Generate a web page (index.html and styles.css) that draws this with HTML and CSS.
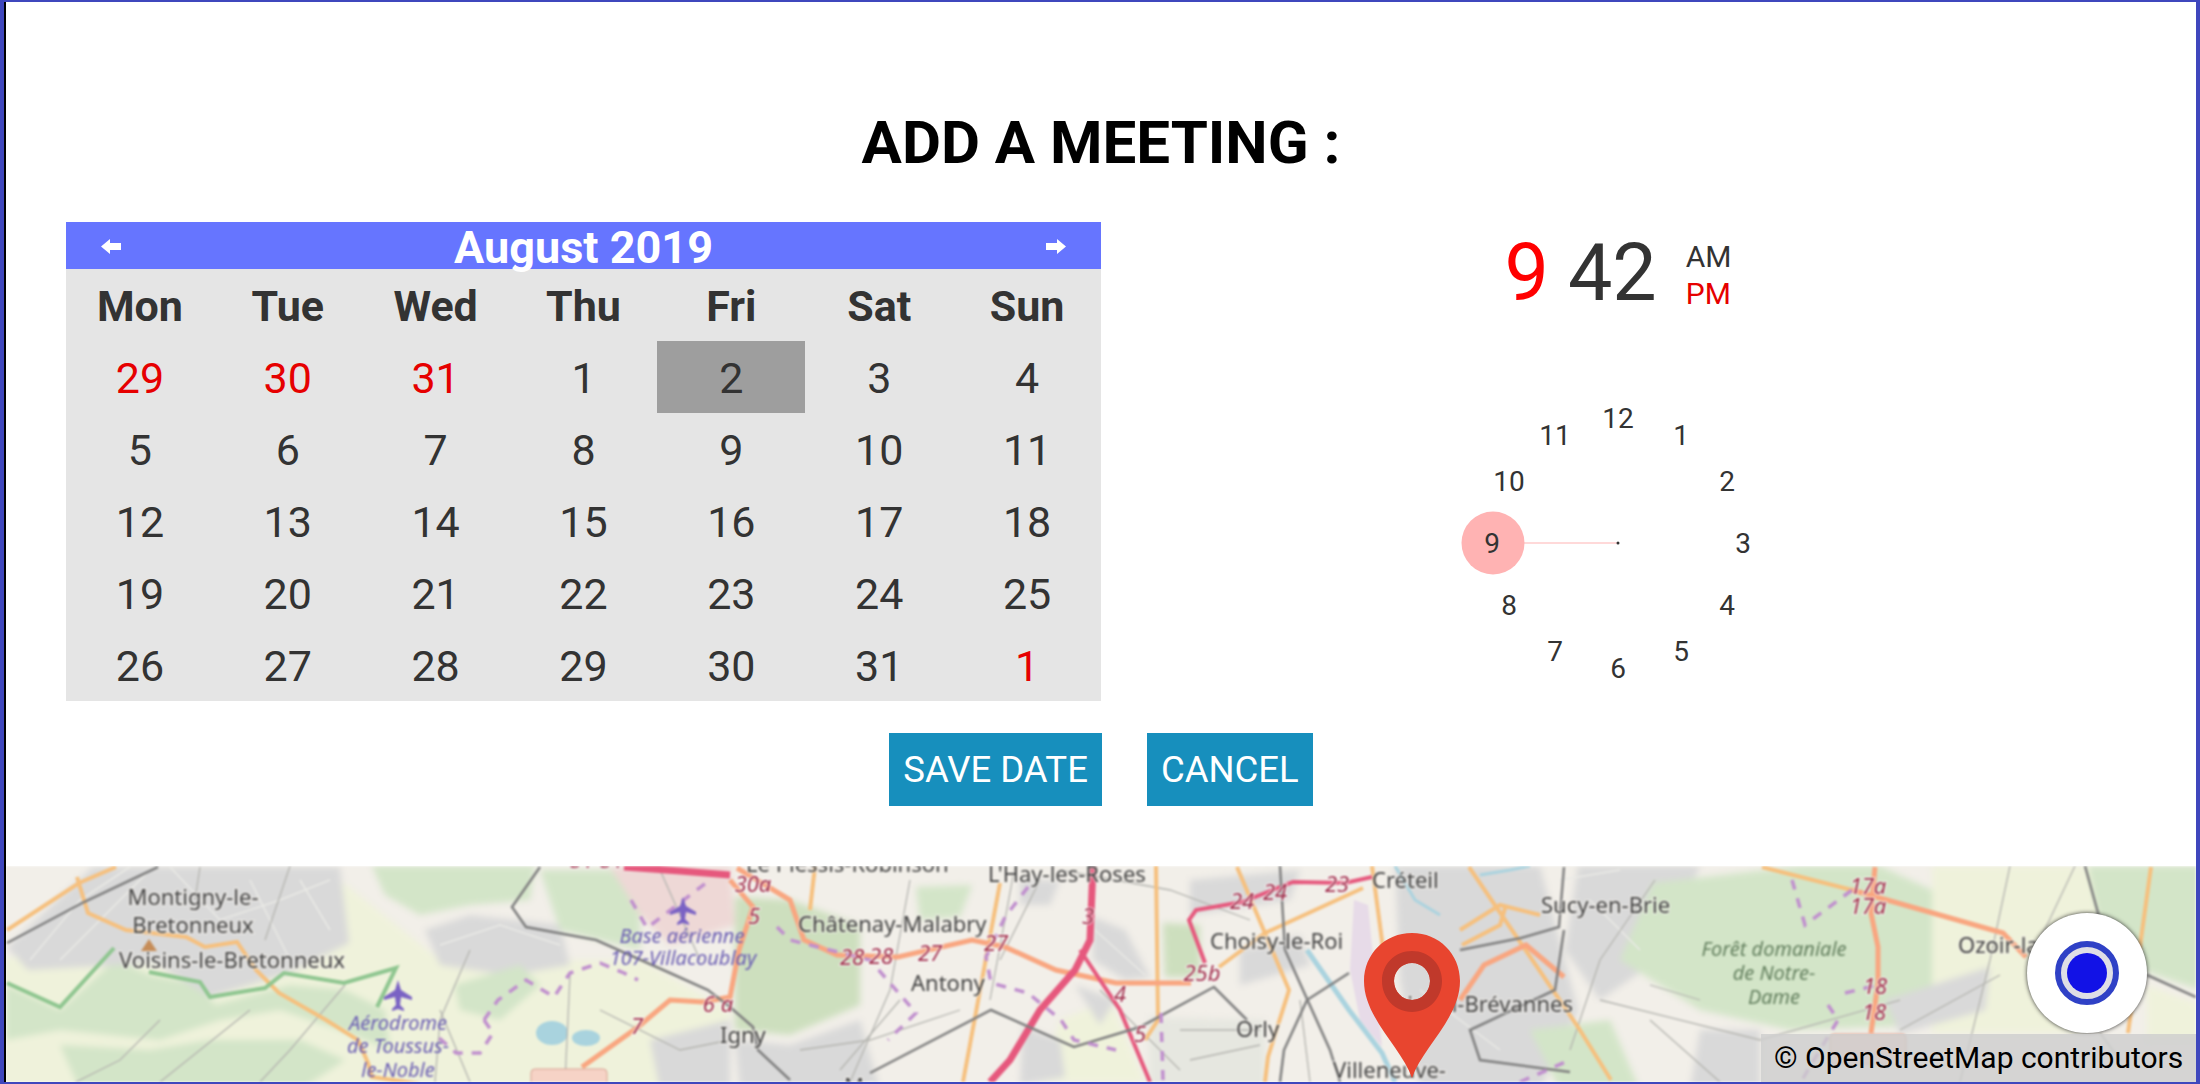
FILE: index.html
```html
<!DOCTYPE html>
<html>
<head>
    <title>Add a meeting</title>
    <link rel="stylesheet" href="styles.css">
</head>
<body>
    <div class="frame">
        <div class="form">
            <h1 class="form-title">ADD A MEETING :</h1>

            <div class="pickers">
                <div class="calendar">
                    <div class="calendar-header">
                        <svg class="arrow" width="20" height="15" viewBox="0 0 20 15"><polygon points="0,7.5 9,0 9,4 20,4 20,11 9,11 9,15"/></svg>
                        <span class="month">August 2019</span>
                        <svg class="arrow" width="20" height="15" viewBox="0 0 20 15"><polygon points="20,7.5 11,0 11,4 0,4 0,11 11,11 11,15"/></svg>
                    </div>
                    <div class="days">
                        <div class="day-name">Mon</div><div class="day-name">Tue</div><div class="day-name">Wed</div><div class="day-name">Thu</div><div class="day-name">Fri</div><div class="day-name">Sat</div><div class="day-name">Sun</div>
                        <div class="day other">29</div><div class="day other">30</div><div class="day other">31</div><div class="day">1</div><div class="day selected">2</div><div class="day">3</div><div class="day">4</div>
                        <div class="day">5</div><div class="day">6</div><div class="day">7</div><div class="day">8</div><div class="day">9</div><div class="day">10</div><div class="day">11</div>
                        <div class="day">12</div><div class="day">13</div><div class="day">14</div><div class="day">15</div><div class="day">16</div><div class="day">17</div><div class="day">18</div>
                        <div class="day">19</div><div class="day">20</div><div class="day">21</div><div class="day">22</div><div class="day">23</div><div class="day">24</div><div class="day">25</div>
                        <div class="day">26</div><div class="day">27</div><div class="day">28</div><div class="day">29</div><div class="day">30</div><div class="day">31</div><div class="day other">1</div>
                    </div>
                </div>

                <div class="time">
                    <div class="time-display">
                        <span class="hour">9</span>
                        <span class="minute">42</span>
                        <div class="ampm">
                            <span>AM</span>
                            <span class="active">PM</span>
                        </div>
                    </div>
                    <svg class="clock" width="340" height="290" viewBox="0 0 340 290">
                        <circle class="clock-hover" cx="44" cy="145" r="31.5"/>
                        <line class="clock-hand" x1="44" y1="145" x2="169" y2="145"/>
                        <circle class="clock-center" cx="169" cy="145" r="1.5"/>
                        <text x="169" y="30">12</text>
                        <text x="232" y="47">1</text>
                        <text x="278" y="93">2</text>
                        <text x="294" y="155">3</text>
                        <text x="278" y="217">4</text>
                        <text x="232" y="263">5</text>
                        <text x="169" y="280">6</text>
                        <text x="106" y="263">7</text>
                        <text x="60" y="217">8</text>
                        <text x="43" y="155">9</text>
                        <text x="60" y="93">10</text>
                        <text x="106" y="47">11</text>
                    </svg>
                </div>
            </div>

            <div class="actions">
                <button class="btn">SAVE DATE</button>
                <button class="btn">CANCEL</button>
            </div>
        </div>

        <div class="map">
            <svg class="map-tiles" width="2190" height="216" viewBox="6 866 2190 216" preserveAspectRatio="none">
                <!-- land use -->
                <rect x="0" y="860" width="2200" height="230" fill="#f2efe9"/>
                <g class="land">
                    <polygon class="farm" points="0,960 340,880 440,960 640,960 730,1010 730,1090 0,1090"/>
                    <polygon class="wood" points="6,985 60,1010 115,960 150,975 200,985 215,1005 290,985 345,990 385,1010 390,1050 340,1030 280,1010 220,1020 160,1040 60,1030 6,1040"/>
                    <polygon class="wood" points="60,1045 150,1050 210,1040 300,1040 345,1060 300,1090 80,1090"/>
                    <polygon class="wood" points="372,866 535,866 530,900 470,905 420,915 385,895"/>
                    <polygon class="grey" points="7,947 93,867 340,867 349,943 289,973 210,997 154,963 28,970"/>
                    <polygon class="grey" points="425,930 470,915 560,925 570,965 510,975 440,965"/>
                    <polygon class="wood" points="560,930 640,950 640,890 610,870 540,870"/>
                    <polygon class="wood" points="455,985 520,965 540,985 500,1020 460,1010"/>
                    <polygon class="grey" points="650,1040 730,1020 730,1090 660,1090"/>
                    <polygon class="airport" points="610,867 730,867 735,925 670,945 640,915"/>
                    <polygon class="park" points="735,897 790,900 860,925 860,1005 790,1035 735,1030"/>
                    <polygon class="grey" points="735,1040 790,1045 860,1020 880,1090 740,1090"/>
                    <polygon class="wood" points="916,887 972,885 960,917 920,920"/>
                    <polygon class="grey" points="1020,880 1060,880 1050,905 1020,905"/>
                    <polygon class="grey" points="1093,917 1125,930 1150,977 1125,980 1093,960"/>
                    <polygon class="park" points="1163,923 1200,925 1200,977 1165,977"/>
                    <polygon class="farm" points="1060,1020 1110,1000 1145,1082 1040,1082"/>
                    <polygon class="grey" points="1023,1027 1060,1040 1065,1077 1020,1085"/>
                    <polygon class="grey" points="1075,985 1115,1000 1100,1025"/>
                    <polygon class="runway" points="1149,1017 1265,1020 1265,1090 1149,1090"/>
                    <polygon class="grey" points="1190,880 1300,870 1290,900 1190,915"/>
                    <polygon class="grey" points="1240,950 1300,935 1310,965 1240,985"/>
                    <polygon class="grey" points="1395,866 1540,866 1578,1010 1540,1090 1420,1090 1400,980"/>
                    <polygon class="grey" points="1578,866 1700,866 1658,960 1600,1000 1565,950"/>
                    <polygon class="wood" points="1653,883 1800,866 1880,866 1932,890 1932,1025 1790,1030 1700,1010 1620,960"/>
                    <polygon class="wood" points="1530,1030 1610,1020 1640,1090 1560,1090"/>
                    <polygon class="grey" points="1700,1030 1760,1030 1760,1090 1690,1090"/>
                    <polygon class="farm" points="1932,866 2088,866 2120,960 2080,1033 1932,1033"/>
                    <polygon class="grey" points="1885,1000 1990,967 1985,1010 1900,1034"/>
                    <polygon class="wood" points="2088,866 2200,866 2200,990 2150,973 2105,950"/>
                    <polygon class="farm" points="2147,985 2200,1005 2200,1040 2147,1040"/>
                </g>
                <polygon class="lilac" points="1354,900 1368,905 1382,1047 1360,1020 1350,970"/>

                <!-- water -->
                <polyline class="river" points="1307,950 1349,1010 1382,1053 1395,1082"/>
                <polyline class="river thin-river" points="1395,866 1415,900 1440,915"/>
                <polyline class="river thin-river" points="1480,875 1510,870 1530,866"/>
                <ellipse cx="552" cy="1033" rx="16" ry="12" fill="#a9d3de"/>
                <ellipse cx="586" cy="1038" rx="14" ry="8" fill="#a9d3de"/>

                <!-- streets in the built-up parts -->
                <g class="street">
                    <polyline points="30,960 80,900 130,867"/>
                    <polyline points="60,960 120,900 150,870"/>
                    <polyline points="170,867 220,920 280,900 330,880"/>
                    <polyline points="250,880 290,960"/>
                    <polyline points="300,880 330,930"/>
                    <polyline points="440,945 500,925 560,945"/>
                    <polyline points="1095,930 1145,975"/>
                    <polyline points="1420,990 1500,1050"/>
                    <polyline points="1590,900 1640,950"/>
                    <polyline points="1560,880 1620,870"/>
                </g>

                <!-- minor roads -->
                <g class="minor">
                    <polyline points="290,866 265,940"/>
                    <polyline points="200,867 195,900"/>
                    <polyline points="160,1020 120,1060 60,1090"/>
                    <polyline points="250,1010 160,1082"/>
                    <polyline points="345,985 290,1050 260,1082"/>
                    <polyline points="470,950 440,1020 435,1082"/>
                    <polyline points="440,1010 470,1082"/>
                    <polyline points="570,975 565,1082"/>
                    <polyline points="600,1010 680,1050 730,1040"/>
                    <polyline points="660,870 700,960"/>
                    <polyline points="910,880 890,990 850,1082"/>
                    <polyline points="900,1000 840,1070"/>
                    <polyline points="1015,866 990,1000"/>
                    <polyline points="1040,880 1000,960"/>
                    <polyline points="800,1050 870,1040 960,1010"/>
                    <polyline points="1060,870 1170,890 1250,920"/>
                    <polyline points="1100,990 1180,1070"/>
                    <polyline points="1300,1000 1310,1082"/>
                    <polyline points="1180,1030 1260,1030"/>
                    <polyline points="1190,1060 1260,1045"/>
                    <polyline points="1655,880 1600,960 1570,1050"/>
                    <polyline points="1650,1020 1720,1082"/>
                    <polyline points="1650,985 1700,1000"/>
                    <polyline points="2010,866 1990,960 1960,1082"/>
                    <polyline points="2075,866 2040,940"/>
                    <polyline points="1900,1030 2000,975"/>
                    <polyline points="1600,1000 1760,1040 1900,1000"/>
                    <polyline points="2100,1033 2120,1060"/>
                </g>

                <!-- main roads -->
                <g class="primary">
                    <polyline points="7,930 79,883 116,867"/>
                    <polyline points="77,877 88,913 126,930 186,937 205,947 237,942 256,970 279,993 326,1020 358,1040 368,1063 372,1077 428,1085"/>
                    <polyline points="815,866 810,910"/>
                    <polyline points="1000,883 963,1082"/>
                    <polyline points="1156,866 1158,1020 1145,1040"/>
                    <polyline points="1237,867 1289,990 1268,1057 1265,1082"/>
                    <polyline points="1219,967 1265,933 1363,888"/>
                    <polyline points="1372,866 1390,1000"/>
                    <polyline points="1469,867 1578,1027 1611,1080"/>
                    <polyline points="1460,930 1500,905 1540,915"/>
                    <polyline points="1462,945 1500,925 1506,905"/>
                    <polyline points="1762,867 1852,890"/>
                    <polyline points="2151,867 2128,1033"/>
                </g>
                <polyline class="trail" points="7,983 60,1007 114,948"/>
                <polyline class="trail" points="149,972 200,982 210,997 265,988 284,973 344,983 396,968 377,1007"/>
                <g class="trunk">
                    <polyline points="737,868 790,900 804,940 837,955 898,957 972,940 1005,947 1056,970 1116,983 1191,983"/>
                    <polyline points="582,1067 638,1027 670,1000 703,1002 730,997 739,950 753,907 730,880"/>
                    <polyline points="1460,1000 1484,965 1526,945 1564,977"/>
                    <polyline points="1852,890 2003,933 2026,957"/>
                    <polyline points="1875,867 1871,913 1878,947 1878,983 1871,1033"/>
                </g>
                <g class="motorway">
                    <polyline points="624,867 680,871 730,875"/>
                    <polyline points="1093,866 1090,940 1075,970 1040,1010 1010,1060 990,1082"/>
                    <polyline class="thin" points="1080,950 1120,1010 1150,1082"/>
                    <polyline class="thin" points="1205,963 1189,920 1196,910 1242,902 1293,882 1345,883 1372,877"/>
                </g>

                <!-- rail -->
                <g class="rail">
                    <polyline points="7,943 84,902 158,867"/>
                    <polyline points="540,867 512,907 526,927 596,940 670,973 708,990 730,1007 753,1027 758,1050 790,1080"/>
                    <polyline points="870,1073 991,1010 1074,1047 1140,1027 1214,987 1247,1020"/>
                    <polyline points="1349,973 1307,1000 1284,1050 1280,1082"/>
                    <polyline points="1280,866 1285,950 1330,1050 1340,1082"/>
                    <polyline points="1460,950 1521,938 1559,927 1564,867"/>
                    <polyline points="1564,930 1555,990 1470,1030 1480,1060 1570,1072"/>
                    <polyline points="2147,975 2196,997"/>
                    <polyline points="2085,866 2100,920"/>
                </g>

                <!-- boundaries -->
                <g class="boundary">
                    <polyline points="484,1020 498,1000 526,980 554,997 570,973 600,963 624,973 638,980"/>
                    <polyline points="484,1020 493,1033 480,1053 456,1053 438,1037"/>
                    <polyline points="631,900 647,928 710,880"/>
                    <polyline points="1028,887 1005,917 986,957 991,983 1028,993 1061,1020 1074,1040 1116,1050"/>
                    <polyline points="777,927 790,940 870,960 916,1013 888,1040"/>
                    <polyline points="1161,1013 1163,1080"/>
                    <polyline points="1792,880 1805,925 1852,890"/>
                    <polyline points="1828,1005 1838,1020 1790,1100"/>
                    <polyline points="1845,993 1878,985"/>
                    <polyline points="1520,1082 1570,1060"/>
                </g>

                <g class="peak">
                    <polygon points="149,939 157,951 141,951"/>
                </g>
                <g class="plane">
                    <path d="M398 980 l3 10 l11 7 v3 l-11 -3 l-1 8 l4 4 v2 l-6 -2 l-6 2 v-2 l4 -4 l-1 -8 l-11 3 v-3 l11 -7 z"/>
                    <path d="M683 897 l3 9 l10 6 v3 l-10 -3 l-1 7 l4 4 v2 l-6 -2 l-6 2 v-2 l4 -4 l-1 -7 l-10 3 v-3 l10 -6 z"/>
                </g>
                <g class="shield">
                    <rect x="531" y="1069" width="76" height="30" rx="4"/>
                    <rect x="1830" y="1034" width="76" height="30" rx="4"/>
                </g>

                <!-- place names -->
                <g class="place">
                    <text x="193" y="905" text-anchor="middle">Montigny-le-</text>
                    <text x="193" y="933" text-anchor="middle">Bretonneux</text>
                    <text x="232" y="968" text-anchor="middle">Voisins-le-Bretonneux</text>
                    <text x="720" y="1043">Igny</text>
                    <text x="746" y="872">Le Plessis-Robinson</text>
                    <text x="988" y="882">L'Hay-les-Roses</text>
                    <text x="798" y="932">Châtenay-Malabry</text>
                    <text x="911" y="991">Antony</text>
                    <text x="844" y="1094">Massy</text>
                    <text x="1210" y="949">Choisy-le-Roi</text>
                    <text x="1372" y="888">Créteil</text>
                    <text x="1236" y="1037">Orly</text>
                    <text x="1333" y="1078">Villeneuve-</text>
                    <text x="1573" y="1012" text-anchor="end">Limeil-Brévannes</text>
                    <text x="1541" y="913">Sucy-en-Brie</text>
                    <text x="1958" y="953">Ozoir-la-Ferrière</text>
                </g>
                <g class="aero">
                    <text x="398" y="1030" text-anchor="middle">Aérodrome</text>
                    <text x="398" y="1053" text-anchor="middle">de Toussus-</text>
                    <text x="398" y="1077" text-anchor="middle">le-Noble</text>
                    <text x="682" y="943" text-anchor="middle">Base aérienne</text>
                    <text x="683" y="965" text-anchor="middle">107-Villacoublay</text>
                </g>
                <g class="forest-name">
                    <text x="1774" y="956" text-anchor="middle">Forêt domaniale</text>
                    <text x="1774" y="980" text-anchor="middle">de Notre-</text>
                    <text x="1774" y="1004" text-anchor="middle">Dame</text>
                </g>
                <g class="exit">
                    <text x="582" y="868">31</text><text x="612" y="868">31</text>
                    <text x="753" y="892">30a</text>
                    <text x="754" y="924">5</text>
                    <text x="852" y="965">28</text><text x="881" y="964">28</text>
                    <text x="930" y="961">27</text><text x="996" y="951">27</text>
                    <text x="1088" y="924">3</text><text x="1120" y="1002">4</text><text x="1140" y="1042">5</text>
                    <text x="1202" y="981">25b</text>
                    <text x="1242" y="909">24</text><text x="1275" y="900">24</text><text x="1337" y="892">23</text>
                    <text x="718" y="1012">6 a</text><text x="637" y="1034">7</text>
                    <text x="1868" y="894">17a</text><text x="1868" y="914">17a</text>
                    <text x="1875" y="994">18</text><text x="1874" y="1020">18</text>
                </g>
            </svg>

            <svg class="pin" width="96" height="146" viewBox="0 0 96 146">
                <path class="pin-body" fill-rule="evenodd" d="M48 145 C38 115 0 85 0 48 C0 21 21 0 48 0 C75 0 96 21 96 48 C96 85 58 115 48 145 Z M48 30 C38 30 30 38 30 48 C30 58 38 67 48 67 C58 67 66 58 66 48 C66 38 58 30 48 30 Z"/>
                <path class="pin-ring" fill-rule="evenodd" d="M48 18 C31 18 18 31 18 48 C18 65 31 79 48 79 C65 79 78 65 78 48 C78 31 65 18 48 18 Z M48 30 C38 30 30 38 30 48 C30 58 38 67 48 67 C58 67 66 58 66 48 C66 38 58 30 48 30 Z"/>
            </svg>

            <div class="locate">
                <div class="locate-ring">
                    <div class="locate-dot"></div>
                </div>
            </div>

            <div class="attribution">© OpenStreetMap contributors</div>
        </div>
    </div>
</body>
</html>
```

FILE: styles.css
```css
* {
    box-sizing: border-box;
}

body {
    margin: 0;
    font-family: "Roboto", sans-serif;
    color: #333;
}

.frame {
    width: 2200px;
    height: 1084px;
    border: solid #3f47bd;
    border-width: 2px 4px;
    display: flex;
    flex-direction: column;
    overflow: hidden;
}

.form {
    height: 864px;
    border-left: 2px solid #000;
    background: #fff;
}

.form-title {
    margin: 0;
    padding-top: 106px;
    height: 220px;
    font-size: 60px;
    line-height: 70px;
    font-weight: 700;
    text-align: center;
    color: #000;
}

.pickers {
    display: flex;
    padding: 0 61px 0 60px;
}

.calendar {
    width: 1035px;
    height: 479px;
    background: #e5e5e5;
}

.calendar-header {
    height: 47px;
    padding: 0 35px;
    background: #6675ff;
    color: #fff;
    display: flex;
    align-items: center;
    justify-content: space-between;
}

.month {
    padding-top: 4px;
    font-size: 45px;
    font-weight: 700;
    line-height: 47px;
}

.arrow {
    fill: #fff;
    margin-top: 2px;
}

.days {
    display: grid;
    grid-template-columns: repeat(7, 1fr);
    grid-auto-rows: 72px;
}

.day-name, .day {
    display: flex;
    align-items: center;
    justify-content: center;
    padding-top: 2px;
    font-size: 43px;
}

.day-name {
    font-weight: 700;
}

.other {
    color: #e60000;
}

.selected {
    background: #9e9e9e;
}

.time {
    flex: 1;
    display: flex;
    flex-direction: column;
    align-items: center;
}

.time-display {
    display: flex;
    align-items: center;
    height: 94px;
    margin-top: 4px;
}

.hour, .minute {
    font-size: 79px;
    line-height: 94px;
}

.hour {
    color: #f00;
    margin-right: 19px;
}

.ampm {
    display: flex;
    flex-direction: column;
    margin: 4px 0 0 29px;
    font-size: 30px;
    line-height: 37px;
}

.active {
    color: #e60000;
}

.clock {
    margin: 78px 0 0 2px;
}

.clock text {
    font-size: 28px;
    text-anchor: middle;
    fill: #333;
}

.clock-hover {
    fill: #ffb3b3;
}

.clock-hand {
    stroke: #ffb3b3;
    stroke-width: 1;
}

.clock-center {
    fill: #333;
}

.actions {
    display: flex;
    justify-content: center;
    gap: 45px;
    margin-top: 32px;
}

.btn {
    height: 73px;
    padding: 0 14px;
    border: 0;
    background: #178fbd;
    color: #fff;
    font-family: inherit;
    font-size: 36.5px;
}

.map {
    position: relative;
    flex: 1;
    border-left: 2px solid #000;
    overflow: hidden;
}

.map-tiles {
    display: block;
    filter: blur(0.8px);
}

.land {
    filter: blur(3px);
}

.farm { fill: #eff2db; }
.wood { fill: #d3e5c8; }
.park { fill: #cddfbe; }
.grey { fill: #d9d9d9; }
.airport { fill: #eed8d6; }
.runway { fill: #e6e7e0; }
.lilac { fill: #e7dbe8; }

.river {
    fill: none;
    stroke: #aad3df;
    stroke-width: 5;
}

.thin-river {
    stroke-width: 3;
}

.street polyline {
    fill: none;
    stroke: #eaeae6;
    stroke-width: 1.5;
}

.minor polyline {
    fill: none;
    stroke: #b5b5b0;
    stroke-width: 1.3;
}

.primary polyline {
    fill: none;
    stroke: #f6c07e;
    stroke-width: 4;
}

.trunk polyline {
    fill: none;
    stroke: #f9a680;
    stroke-width: 5;
}

.trail {
    fill: none;
    stroke: #8fc690;
    stroke-width: 4;
}

.motorway polyline {
    fill: none;
    stroke: #e6587d;
    stroke-width: 7;
}

.motorway .thin {
    stroke-width: 4;
}

.rail polyline {
    fill: none;
    stroke: #808080;
    stroke-width: 2.5;
}

.boundary polyline {
    fill: none;
    stroke: #c08fce;
    stroke-width: 3.5;
    stroke-dasharray: 10 9;
}

.place text {
    font-family: "Noto Sans", sans-serif;
    font-size: 22px;
    fill: #444;
    stroke: #f2efe9;
    stroke-width: 2.5;
    stroke-opacity: 0.6;
    paint-order: stroke;
}

.aero text {
    font-family: "Noto Sans", sans-serif;
    font-style: italic;
    font-size: 20px;
    fill: #6a5db3;
}

.forest-name text {
    font-family: "Noto Sans", sans-serif;
    font-style: italic;
    font-size: 20px;
    fill: #64805f;
}

.exit text {
    font-family: "Noto Sans", sans-serif;
    font-style: italic;
    font-size: 22px;
    text-anchor: middle;
    fill: #a02c4a;
    stroke: #fff;
    stroke-width: 2;
    stroke-opacity: 0.7;
    paint-order: stroke;
}

.peak polygon {
    fill: #c68d58;
}

.plane path {
    fill: #7a62c4;
}

.shield rect {
    fill: #f6d3c6;
    stroke: #d9a393;
}

.pin {
    position: absolute;
    left: 1358px;
    top: 67px;
}

.pin-body {
    fill: #e8452f;
}

.pin-ring {
    fill: #c0392b;
}

.locate {
    position: absolute;
    left: 2021px;
    top: 47px;
    width: 120px;
    height: 120px;
    border-radius: 50%;
    background: #fff;
    box-shadow: 0 0 4px #333;
    display: flex;
    align-items: center;
    justify-content: center;
}

.locate-ring {
    width: 64px;
    height: 64px;
    border-radius: 50%;
    border: 6px solid #2f41c6;
    background: #dedee6;
    display: flex;
    align-items: center;
    justify-content: center;
}

.locate-dot {
    width: 40px;
    height: 40px;
    border-radius: 50%;
    background: #1212e6;
}

.attribution {
    position: absolute;
    right: 0;
    bottom: 0;
    height: 48px;
    width: 435px;
    padding-left: 13px;
    background: rgba(205, 205, 205, 0.8);
    color: #000;
    font-size: 30px;
    line-height: 48px;
    white-space: nowrap;
}
```
